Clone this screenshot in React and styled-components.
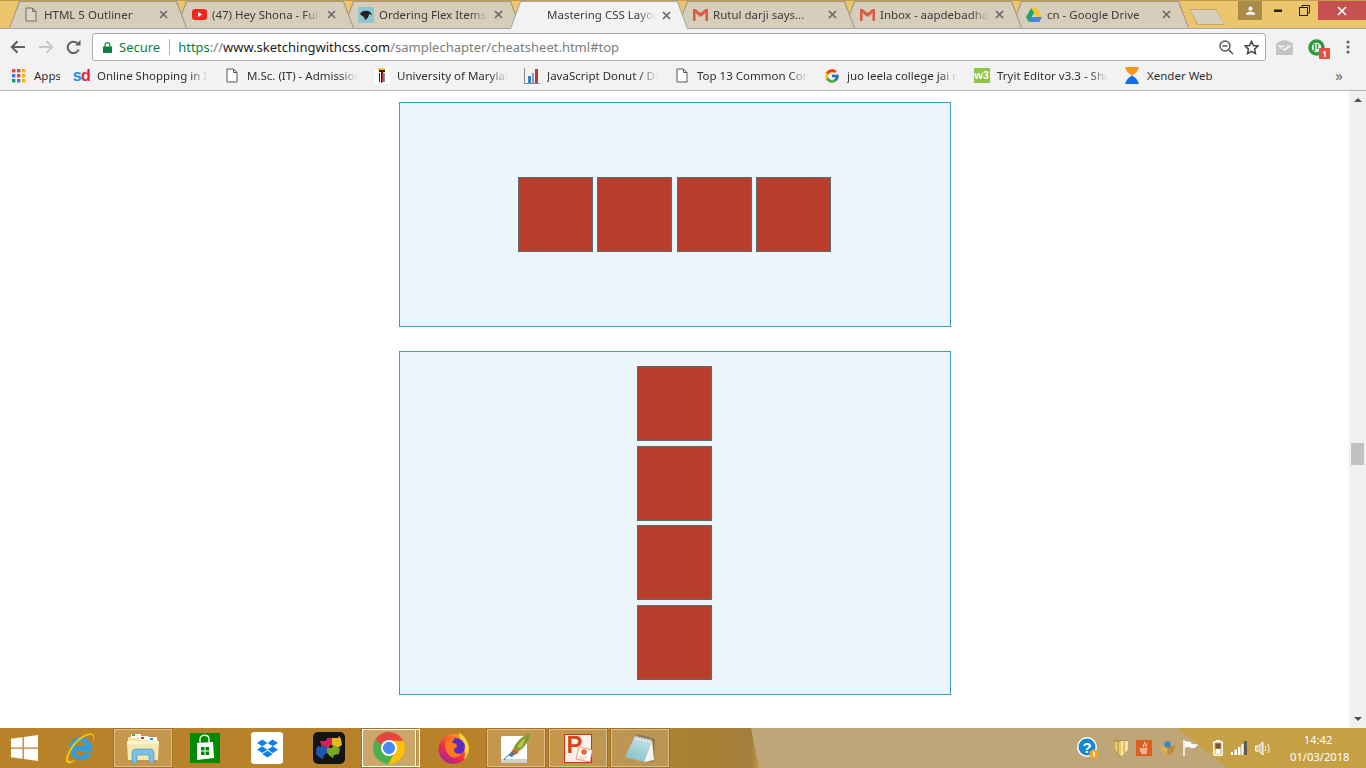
import React from 'react';
import styled, {createGlobalStyle} from 'styled-components';
import {FaDropbox} from 'react-icons/fa';
import {FcGoogle} from 'react-icons/fc';

const uiFont = `"Noto Sans", "Open Sans", "Liberation Sans", sans-serif`;

const Global = createGlobalStyle`
    html, body {
        margin: 0;
        height: 100%;
        overflow: hidden;
        background: #fff;
        font-family: ${uiFont};
    }
    * { box-sizing: border-box; }
`;

const Screen = styled.div`
    width: 1366px;
    height: 768px;
    display: flex;
    flex-direction: column;
    overflow: hidden;
`;

/* ---------- tabs ---------- */

const TabStrip = styled.div`
    position: relative;
    z-index: 2;
    height: 28px;
    flex: none;
    display: flex;
    padding: 1px 0 0 9px;
    background: #edc56c;
    border-top: 1px solid #c29c52;
`;

const Tab = styled.div`
    position: relative;
    width: 178px;
    height: ${p => (p.$active ? 28 : 27)}px;
    flex: none;
    margin-top: -1px;
    margin-right: -11px;
    padding: 0 0 0 ${p => (p.$plain ? 32 : 15)}px;
    display: flex;
    align-items: center;
    z-index: ${p => (p.$active ? 20 : 10 - p.$order)};
    background: ${p => (p.$active ? '#a8a8a8' : '#a39a85')};
    clip-path: polygon(10px 0, 168px 0, 178px 100%, 0 100%);

    &::before {
        content: '';
        position: absolute;
        inset: 1px 1px 0 1px;
        background: ${p => (p.$active ? '#f2f2f2' : '#d6ceba')};
        clip-path: polygon(10px 0, 166px 0, 176px 100%, 0 100%);
    }
`;

const TabIcon = styled.span`
    position: relative;
    width: 16px;
    height: 16px;
    margin-left: ${p => p.$shift || 0}px;
    flex: none;
    display: flex;
    align-items: center;
    justify-content: center;
`;

const TabTitle = styled.span`
    position: relative;
    width: 111px;
    margin-left: 5px;
    font-size: 11.5px;
    line-height: 16px;
    color: #3b3b3b;
    white-space: nowrap;
    overflow: hidden;
    mask-image: linear-gradient(to right, #000 82%, transparent 98%);
`;

const TabClose = styled.svg`
    position: relative;
    margin-left: 4px;
    flex: none;
`;

const NewTab = styled.div`
    position: relative;
    width: 36px;
    height: 16px;
    margin: 7px 0 0 11px;
    flex: none;
    background: #c4a862;
    clip-path: polygon(0 0, 27px 0, 100% 100%, 8px 100%);

    &::before {
        content: '';
        position: absolute;
        inset: 1px;
        background: #d6ceba;
        clip-path: polygon(0 0, 26px 0, 100% 100%, 8px 100%);
    }
`;

const WindowControls = styled.div`
    margin-left: auto;
    margin-top: -1px;
    display: flex;
    align-items: flex-start;
`;

const ProfileButton = styled.div`
    width: 24px;
    height: 19px;
    margin-right: 3px;
    background: #a98b45;
    display: flex;
    align-items: center;
    justify-content: center;
`;

const WindowButton = styled.div`
    width: ${p => p.$w}px;
    height: 19px;
    display: flex;
    align-items: center;
    justify-content: center;
    background: ${p => p.$bg || 'transparent'};
`;

/* ---------- toolbar ---------- */

const Toolbar = styled.div`
    height: 34px;
    flex: none;
    display: flex;
    align-items: center;
    padding: 4px 0 1px 0;
    border-top: 1px solid #a6a6a6;
    background: #f2f2f2;
`;

const NavButtons = styled.div`
    width: 92px;
    flex: none;
    display: flex;
    align-items: center;
    padding-left: 10px;
    gap: 12px;
`;

const Omnibox = styled.div`
    width: 1174px;
    height: 28px;
    flex: none;
    display: flex;
    align-items: center;
    padding: 0 6px 0 10px;
    background: #fff;
    border: 1px solid #ababab;
    border-radius: 3px;
`;

const Secure = styled.span`
    margin-left: 7px;
    font-size: 13px;
    color: #0b8043;
`;

const Divider = styled.span`
    width: 1px;
    height: 16px;
    margin: 0 8px 0 9px;
    background: #b4b4b4;
`;

const Url = styled.span`
    font-size: 13px;
    color: #7d7d7d;
    white-space: nowrap;

    b { font-weight: 400; color: #0b8043; }
    i { font-style: normal; color: #222; }
`;

const OmniActions = styled.div`
    margin-left: auto;
    display: flex;
    align-items: center;
    gap: 10px;
`;

const Extensions = styled.div`
    flex: 1;
    display: flex;
    align-items: center;
    padding-left: 10px;
`;

const ExtensionSlot = styled.div`
    position: relative;
    display: flex;
    margin-left: ${p => p.$gap || 0}px;
`;

const Badge = styled.span`
    position: absolute;
    left: 11px;
    top: 9px;
    width: 11px;
    height: 11px;
    background: #e8503f;
    color: #fff;
    font-size: 8px;
    line-height: 11px;
    font-weight: 700;
    text-align: center;
`;

const FlipSvg = styled.svg`
    transform: ${p => (p.$flip ? 'scaleX(-1)' : 'none')};
`;

/* ---------- bookmarks ---------- */

const BookmarkBar = styled.div`
    height: 29px;
    flex: none;
    display: flex;
    align-items: center;
    padding-bottom: 1px;
    background: #f2f2f2;
    border-bottom: 1px solid #b4b4b4;
`;

const Bookmark = styled.div`
    width: ${p => p.$w || 150}px;
    flex: none;
    display: flex;
    align-items: center;
    padding-left: ${p => p.$pad || 8}px;
`;

const BookmarkIcon = styled.span`
    width: 17px;
    height: 17px;
    flex: none;
    display: flex;
    align-items: center;
    justify-content: center;
`;

const BookmarkText = styled.span`
    flex: 1;
    margin-left: 7px;
    margin-right: 5px;
    font-size: 11.5px;
    color: #2f2f2f;
    white-space: nowrap;
    overflow: hidden;
    mask-image: ${p => (p.$nofade ? 'none' : 'linear-gradient(to right, #000 82%, transparent 98%)')};
`;

const SdLogo = styled.span`
    font-family: "Liberation Sans", sans-serif;
    font-size: 16px;
    font-weight: 700;
    letter-spacing: -0.5px;
    color: #1a8fe0;

    em { font-style: normal; color: #ee1c3b; }
`;

const W3Logo = styled.span`
    width: 16px;
    height: 15px;
    background: #8dc63f;
    color: #fff;
    font-family: "Liberation Sans", sans-serif;
    font-size: 11px;
    line-height: 15px;
    font-weight: 700;
    text-align: center;
`;

const More = styled.span`
    margin-left: auto;
    margin-right: 23px;
    font-size: 15px;
    line-height: 15px;
    color: #666;
`;

/* ---------- page ---------- */

const Body = styled.div`
    flex: 1;
    min-height: 0;
    display: flex;
    background: #fff;
`;

const Page = styled.div`
    flex: 1;
    display: flex;
    flex-direction: column;
    align-items: center;
    gap: 24px;
    padding: 11px 0 0 1px;
`;

const Demo = styled.div`
    width: 552px;
    height: ${p => p.$h}px;
    display: flex;
    flex-direction: ${p => p.$dir};
    align-items: center;
    justify-content: center;
    gap: 4.4px;
    padding-right: ${p => (p.$dir === 'row' ? 0.8 : 1)}px;
    background: #ecf5fc;
    border: 1px solid #3e9bc9;
`;

const Square = styled.div`
    width: 75px;
    height: 75px;
    flex: none;
    background: #b93d2d;
    border: 1px solid #5f6a6a;
`;

const Scrollbar = styled.div`
    width: 17px;
    flex: none;
    display: flex;
    flex-direction: column;
    align-items: center;
    background: #f1f1f1;
`;

const ScrollArrow = styled.div`
    width: 0;
    height: 0;
    margin-top: ${p => (p.$down ? 'auto' : '7px')};
    margin-bottom: ${p => (p.$down ? '7px' : '0')};
    border-left: 4px solid transparent;
    border-right: 4px solid transparent;
    border-bottom: ${p => (p.$down ? 'none' : '4px solid #505050')};
    border-top: ${p => (p.$down ? '4px solid #505050' : 'none')};
`;

const ScrollThumb = styled.div`
    width: 13px;
    height: 22px;
    margin-top: 341px;
    background: #c1c1c1;
`;

/* ---------- taskbar ---------- */

const Taskbar = styled.div`
    position: relative;
    height: 40px;
    flex: none;
    display: flex;
    align-items: stretch;
    gap: 4px;
    padding: 1px 0;
    background: linear-gradient(to right, #b8822a 0, #b8822a 560px, #a88033 700px, #a37d40 751px, #c6a045 760px, #c6a045 100%);

    &::before {
        content: '';
        position: absolute;
        inset: 0;
        background: #bfa678;
        clip-path: polygon(751px 0, 1177px 0, 1227px 100%, 759px 100%);
    }
`;

const TaskSlot = styled.div`
    position: relative;
    width: ${p => p.$w || 58}px;
    flex: none;
    display: flex;
    align-items: center;
    justify-content: center;
    background: ${p => (p.$open ? 'rgba(255, 255, 255, 0.17)' : 'transparent')};
    border: ${p => (p.$open ? '1px solid rgba(255, 255, 255, 0.38)' : 'none')};
    box-shadow: ${p => (p.$open ? '0 0 0 1px rgba(120, 80, 20, 0.35)' : 'none')};
`;

const ChromeSlot = styled(TaskSlot)`
    background: rgba(255, 255, 255, 0.3);
    border: 1px solid #fff;
    width: 54px;
    margin-right: 5px;

    &::after {
        content: '';
        position: absolute;
        top: -1px;
        bottom: -1px;
        right: -5px;
        width: 4px;
        border: 1px solid #fff;
        border-left: none;
        background: rgba(255, 255, 255, 0.2);
    }
`;

const Tray = styled.div`
    position: relative;
    margin-left: auto;
    display: flex;
    align-items: center;
    gap: 15px;
`;

const TrayGroup = styled.div`
    display: flex;
    align-items: center;
    gap: 8px;
`;

const Clock = styled.div`
    width: 76px;
    padding-right: 20px;
    margin-left: 4px;
    color: #fff;
    font-size: 11.2px;
    line-height: 17px;
    text-align: center;
    white-space: nowrap;
`;

/* ---------- drawings ---------- */

const DocIcon = () => (
    <svg width="12" height="15" viewBox="0 0 12 15">
        <path d="M1 1h6.500L11 4.500V14H1z M7.500 1v3.500H11" fill="#fff" fillOpacity="0.15" stroke="#6b6b6b" />
    </svg>
);

const PlainDoc = () => (
    <svg width="12" height="15" viewBox="0 0 12 15">
        <path d="M1 1h6.500L11 4.500V14H1z M7.500 1v3.500H11" fill="#fff" stroke="#555" />
    </svg>
);

const YoutubeIcon = () => (
    <svg width="15" height="11" viewBox="0 0 15 11">
        <rect width="15" height="11" rx="3" fill="#f1271c" />
        <path d="M6 3l4 2.500L6 8z" fill="#fff" />
    </svg>
);

const BirdIcon = () => (
    <svg width="16" height="16" viewBox="0 0 16 16">
        <rect width="16" height="16" fill="#8ec7d2" />
        <path d="M2 7c1-3 5-4 8-3 2 .6 3 2 4 4l-3-1c0 3-2 5-4 6l-1-3C4 9 3 8 2 7z" fill="#222" />
    </svg>
);

const GmailIcon = () => (
    <svg width="15" height="12" viewBox="0 0 15 12">
        <path d="M0 0h2.500l5 4 5-4H15v12h-2.500V4l-5 4-5-4v8H0z" fill="#dd5a44" />
    </svg>
);

const DriveIcon = () => (
    <svg width="16" height="14" viewBox="0 0 16 14">
        <path d="M5.300 0h5.200L16 9h-5.200z" fill="#f7c325" />
        <path d="M5.300 0L0 9l2.700 5 5.300-9z" fill="#1ea362" />
        <path d="M5.200 9H16l-2.700 5H2.700z" fill="#4a86d8" />
    </svg>
);

const CloseX = () => (
    <TabClose width="9" height="9" viewBox="0 0 9 9">
        <path d="M1 1l7 7M8 1L1 8" stroke="#6a6a6a" strokeWidth="1.700" />
    </TabClose>
);

const AppsGrid = () => {
    const colors = ['#e8453c', '#e8453c', '#f4b400', '#3b78e7', '#e8453c', '#f4b400', '#0f9d58', '#3b78e7', '#f4b400'];
    return (
        <svg width="14" height="14" viewBox="0 0 14 14">
            {colors.map((c, i) => (
                <rect key={i} x={(i % 3) * 5} y={Math.floor(i / 3) * 5} width="3.400" height="3.400" fill={c} />
            ))}
        </svg>
    );
};

const UmdIcon = () => (
    <svg width="16" height="17" viewBox="0 0 16 17">
        <rect width="16" height="17" fill="#fff" />
        <path d="M4 1h7v2H4z" fill="#f4c51c" />
        <path d="M5 3h6v2H5zM7 5h1v11H7zM5 6h1v9H5zM9.500 6h1v9h-1z" fill="#222" />
        <path d="M8 5h1.300v10H8z" fill="#b3262c" />
    </svg>
);

const ChartIcon = () => (
    <svg width="16" height="16" viewBox="0 0 16 16">
        <path d="M.5 0v15.500H16" fill="none" stroke="#888" />
        <rect x="4" y="8" width="3" height="7" fill="#3f7fc4" />
        <rect x="8" y="5" width="2" height="10" fill="#7aa0c8" />
        <rect x="11" y="1" width="3" height="14" fill="#c0392b" />
    </svg>
);

const XenderIcon = () => (
    <svg width="16" height="17" viewBox="0 0 16 17">
        <path d="M1 0c3 0 11 0 14 0-1 4-4 7-7 8.500C5 7 2 4 1 0z" fill="#f7941d" />
        <path d="M1 17c3 0 11 0 14 0-1-4-4-7-7-8.500C5 10 2 13 1 17z" fill="#0f6fe8" />
    </svg>
);

const Lock = () => (
    <svg width="9" height="11" viewBox="0 0 9 11">
        <path d="M2 5V3.200a2.500 2.500 0 0 1 5 0V5" fill="none" stroke="#0b8043" strokeWidth="1.200" />
        <rect y="4.500" width="9" height="6.500" rx="0.500" fill="#0b8043" />
    </svg>
);

const Arrow = ({flip, color}) => (
    <FlipSvg $flip={flip} width="16" height="14" viewBox="0 0 16 14">
        <path d="M15 7H2M7.500 1.300L1.800 7l5.700 5.700" fill="none" stroke={color} strokeWidth="2" />
    </FlipSvg>
);

const Reload = () => (
    <svg width="15" height="15" viewBox="0 0 15 15">
        <path d="M12.700 9.500A5.700 5.700 0 1 1 11.500 3.400" fill="none" stroke="#5f5f5f" strokeWidth="2" />
        <path d="M9 5.600h5.500V.1z" fill="#5f5f5f" />
    </svg>
);

const Magnifier = () => (
    <svg width="15" height="15" viewBox="0 0 15 15">
        <circle cx="6" cy="6" r="5" fill="none" stroke="#555" strokeWidth="1.400" />
        <path d="M3.500 6h5M9.700 9.700L14 14" stroke="#555" strokeWidth="1.500" />
    </svg>
);

const Star = () => (
    <svg width="15" height="15" viewBox="0 0 15 15">
        <path d="M7.500 1.300l1.900 4.200 4.600.5-3.400 3.100.9 4.500-4-2.300-4 2.300.9-4.500L1 6l4.600-.5z" fill="none" stroke="#444" strokeWidth="1.500" />
    </svg>
);

const MailCheck = () => (
    <svg width="17" height="15" viewBox="0 0 17 15">
        <path d="M0 3.500l4-2.200 4.500-1.300 4.500 1.300 4 2.200V15H0z" fill="#c4c4c4" />
        <path d="M1 5.500h15L8.500 11z" fill="#f2f2f2" />
        <path d="M5.500 7l1.500 1.500 4-3" fill="none" stroke="#9a9a9a" />
    </svg>
);

const GreenRing = () => (
    <svg width="17" height="17" viewBox="0 0 17 17">
        <circle cx="8.500" cy="8.500" r="6.500" fill="none" stroke="#2e9a3e" strokeWidth="3.500" />
        <path d="M6.500 5v7M9.500 5v5" stroke="#2e9a3e" strokeWidth="1.500" />
    </svg>
);

const MenuDots = () => (
    <svg width="4" height="14" viewBox="0 0 4 14">
        <circle cx="2" cy="2" r="1.600" fill="#666" />
        <circle cx="2" cy="7" r="1.600" fill="#666" />
        <circle cx="2" cy="12" r="1.600" fill="#666" />
    </svg>
);

const WinLogo = () => (
    <svg width="27" height="26" viewBox="0 0 27 26">
        <path d="M0 3.700l11.500-1.500v10.200H0zM12.800 2l14.200-2v12.400H12.800zM0 13.700h11.500v10.100L0 22.300zM12.800 13.700H27V26l-14.200-2z" fill="#fff" />
    </svg>
);

const IeIcon = () => (
    <svg width="32" height="32" viewBox="0 0 32 32">
        <path d="M15 5C8 5 4.500 11 4.500 16.500 4.500 23 9.500 28 16 28c5 0 9-2.500 10.500-7H20c-1 2-2.500 3-4.500 3-3 0-5-2-5.200-5h16.700c.6-7-4-14-12-14zM10.500 14c.4-2.800 2.300-4.500 5-4.500s4.500 1.800 4.800 4.500z" fill="#2d9fe0" />
        <path d="M27 1.500C22 0 12 6 6 15 1.500 22-.5 28 1.800 30.500 4 32.500 9 30 12 27.500 8 29 4.500 30 3.500 28.500 2 26.500 5 20 10 13 16 6 24 1.500 27.500 3.500c1.500 1 1 4-.5 7.500 2.500-3.500 3.500-8 0-9.500z" fill="#f4c20d" />
    </svg>
);

const FolderIcon = () => (
    <svg width="32" height="30" viewBox="0 0 32 30">
        <path d="M1 4h9l2 2h17v5H1z" fill="#f3e3a5" />
        <rect x="4" y="1" width="10" height="4" fill="#fff" />
        <rect x="5" y="1" width="3" height="2" fill="#3db54a" />
        <rect x="12" y="3" width="9" height="4" fill="#fff" />
        <rect x="14" y="4" width="3" height="2" fill="#d9342b" />
        <rect x="21" y="4" width="9" height="4" fill="#fff" />
        <rect x="23" y="5" width="3" height="2" fill="#2f8ae0" />
        <path d="M0 8h32l-1 19H1z" fill="#f6e9b0" />
        <path d="M0 8h32v3H0z" fill="#fbf3cd" />
        <path d="M5 30V20c0-3 2-4 4-4h14c2 0 4 1 4 4v10h-5v-8h-12v8z" fill="#7cc0e8" stroke="#3f89bd" strokeWidth="0.600" />
    </svg>
);

const StoreIcon = () => (
    <svg width="30" height="30" viewBox="0 0 30 30">
        <rect width="30" height="30" fill="#008a00" />
        <path d="M7 10l16-1 1 16-17 2z" fill="#fff" />
        <path d="M10 10V6c0-5 9-5 9 0v4" fill="none" stroke="#fff" strokeWidth="1.300" />
        <path d="M11 14h3.500v3.500H11zM15.500 14H19v3.500h-3.500zM11 18.500h3.500V22H11zM15.500 18.500H19V22h-3.500z" fill="#008a00" />
    </svg>
);

const DropboxTile = styled.span`
    width: 32px;
    height: 32px;
    background: #fff;
    border-radius: 3px;
    color: #0d7fe8;
    display: flex;
    align-items: center;
    justify-content: center;
    font-size: 21px;
`;

const JigsawIcon = () => (
    <svg width="32" height="32" viewBox="0 0 32 32">
        <rect width="32" height="32" rx="5" fill="#141414" />
        <path d="M7 9h6l1-3h6l1 3v4h-4l-1 3H9z" fill="#d81e5b" />
        <path d="M19 6h6l1-2 2 3 1 6-3 2h-4l-3-2z" fill="#e8b61c" />
        <path d="M14 16h5l1-3 4 2 3 1-1 6-5 1-1 3-3-2-3-3z" fill="#78a81f" />
        <path d="M3 17l2-3 4 1 1-2 4 3v5l-3 2-1 4-4-2-3-3z" fill="#1f57b0" />
    </svg>
);

const ChromeIcon = () => (
    <svg width="32" height="32" viewBox="4 4 40 40">
        <circle cx="24" cy="24" r="20" fill="#4caf50" />
        <path d="M24 4v20l8 4-8.800 16h.8c11 0 20-9 20-20S35 4 24 4z" fill="#ffc107" />
        <path d="M41.800 15H24v13l-3-1L7.200 13.300C10.700 7.700 16.900 4 24 4c7.800 0 14.500 4.500 17.800 11z" fill="#e8453c" />
        <circle cx="24" cy="24" r="10" fill="#fff" />
        <circle cx="24" cy="24" r="7.700" fill="#4a8af4" />
    </svg>
);

const FirefoxIcon = () => (
    <svg width="32" height="32" viewBox="0 0 32 32">
        <defs>
            <linearGradient id="ffBody" x1="0.800" y1="0.100" x2="0.200" y2="0.900">
                <stop offset="0" stopColor="#ff9a1f" />
                <stop offset="0.600" stopColor="#f0303f" />
                <stop offset="1" stopColor="#b01fa0" />
            </linearGradient>
        </defs>
        <circle cx="15.500" cy="17" r="15" fill="url(#ffBody)" />
        <path d="M21 .5c5 3 10 9 10 16 0 4-2 9-5 11 2-5 1-10-2-14-1-4-3-8-3-13z" fill="#ffd53a" />
        <circle cx="18" cy="15" r="9" fill="#5a2bc0" />
        <path d="M8 9c3-3 6-3 9-2-2 1-3 3-3 4 3 0 5 1 5 3s-3 2-3 4c0 3 4 5 8 3-2 4-8 6-12 3-4-3-6-10-4-15z" fill="#ff7a1f" />
    </svg>
);

const FeatherIcon = () => (
    <svg width="30" height="30" viewBox="0 0 30 30">
        <rect x="0" y="3" width="26" height="27" rx="2" fill="#fff" />
        <rect x="0" y="26" width="26" height="4" rx="1" fill="#cfcfcf" />
        <path d="M29 0c-8 3-14 9-17 16l6 2c6-4 10-10 11-18z" fill="#7f9a2e" />
        <path d="M24 5c-3 2-6 5-8 9l4 1c2-3 4-6 4-10z" fill="#b7c14a" />
        <path d="M12 16c-2 3-3 5-3 7l7-2 2-3z" fill="#c8622a" />
        <path d="M10 19l4 2-3 3-3-1z" fill="#3b7fb5" />
        <path d="M3 27c2-3 4-5 6-6" stroke="#2c5f8a" strokeWidth="1" fill="none" />
    </svg>
);

const PptTile = styled.svg`
    display: block;
    font-family: "Liberation Sans", sans-serif;
`;

const PptIcon = () => (
    <PptTile width="29" height="29" viewBox="0 0 29 29">
        <rect x="0.500" y="0.500" width="27" height="28" fill="#fdf1e8" stroke="#c9341b" />
        <text x="2.500" y="19" fontSize="24" fontWeight="700" fill="#d2491f">P</text>
        <path d="M15 13l13.500 3-2.500 12-14-3z" fill="#fff" stroke="#e26a3c" strokeWidth="0.700" />
        <circle cx="20" cy="18" r="2.800" fill="#e8652f" />
        <path d="M15 22l8 1.800M14.500 24l6 1.300" stroke="#e8a080" strokeWidth="0.700" />
    </PptTile>
);

const NotepadIcon = () => (
    <svg width="31" height="31" viewBox="0 0 31 31">
        <defs>
            <linearGradient id="padFill" x1="0.200" y1="1" x2="0.700" y2="0">
                <stop offset="0" stopColor="#7fc0ca" />
                <stop offset="1" stopColor="#c8e4e6" />
            </linearGradient>
        </defs>
        <path d="M13 1l17 5-1 22-3 1-12-3z" fill="#6f6040" fillOpacity="0.55" />
        <path d="M19 29l8-22 2 20z" fill="#f4f4f4" />
        <path d="M10 3l17 4-8 22-19-5z" fill="url(#padFill)" />
        <path d="M10 3l17 4-1 3L9 6z" fill="#e2e2e2" />
        <path d="M11 1.500v3M14 2v3M17 3v3M20 3.500v3M23 4.500v3M26 5v3" stroke="#777" strokeWidth="0.800" />
    </svg>
);

const HelpIcon = styled.svg`
    display: block;
    font-family: "Liberation Sans", sans-serif;
`;

const HelpBadge = () => (
    <HelpIcon width="22" height="22" viewBox="0 0 22 22">
        <circle cx="10" cy="10" r="9.250" fill="#1187d8" stroke="#fff" strokeWidth="1.500" />
        <text x="10" y="15.500" fontSize="15" fontWeight="700" fill="#fff" textAnchor="middle">?</text>
        <circle cx="17" cy="17" r="4.500" fill="#f4a71d" />
        <rect x="16.300" y="14.500" width="1.400" height="5" fill="#fff" />
    </HelpIcon>
);

const ShieldIcon = () => (
    <svg width="14" height="17" viewBox="0 0 14 17">
        <path d="M0 1h14v9l-7 7-7-7z" fill="#ecc66b" stroke="#7a6120" strokeWidth="0.600" />
        <path d="M7 1v16l7-7V1z" fill="#f7e3a2" />
        <path d="M4 1v12M10 1v12" stroke="#a98a36" strokeWidth="0.800" />
    </svg>
);

const JavaIcon = () => (
    <svg width="16" height="16" viewBox="0 0 16 16">
        <rect width="16" height="16" fill="#dd5e1f" />
        <path d="M8.500 2c1 2-2 3-1 5M10.500 3.500c.5 1.500-1.500 2-.5 3.500" fill="none" stroke="#fff" />
        <path d="M3.500 8.500h8v1h-8zM4 10.500h7v1H4zM5 12.500h6v1H5z" fill="#fff" />
    </svg>
);

const PackageIcon = () => (
    <svg width="15" height="15" viewBox="0 0 15 15">
        <path d="M0 4l7.500 3L15 4l-1.500 7L7.500 15 2 11z" fill="#d9ad55" />
        <path d="M7.500 7L15 4l-1.500 7-6 4z" fill="#b98c3c" />
        <circle cx="7.500" cy="3.500" r="3.200" fill="#3a83c5" />
    </svg>
);

const FlagIcon = () => (
    <svg width="15" height="16" viewBox="0 0 15 16">
        <path d="M1 0v16" stroke="#fff" strokeWidth="1.500" />
        <path d="M2 1l6 1 .6 2 6.400.4-3 3.600-4.500.3L7 6.700 2 7.500z" fill="#fff" />
    </svg>
);

const BatteryIcon = () => (
    <svg width="10" height="16" viewBox="0 0 10 16">
        <path d="M3 0h4v1.500H3z" fill="#fff" />
        <rect x="0.750" y="1.750" width="8.500" height="13.500" rx="1" fill="none" stroke="#fff" strokeWidth="1.500" />
        <rect x="2.500" y="3.500" width="5" height="5" fill="#6f5a34" />
        <rect x="2.500" y="9" width="5" height="5" fill="#fff" />
    </svg>
);

const SignalIcon = () => (
    <svg width="16" height="14" viewBox="0 0 16 14">
        <rect x="0" y="11" width="2" height="3" fill="#fff" />
        <rect x="3.500" y="8.500" width="2.500" height="5.500" fill="#fff" />
        <rect x="7" y="6" width="2.500" height="8" fill="#fff" />
        <rect x="10.500" y="3" width="2" height="11" fill="#fff" />
        <rect x="13" y="0" width="3" height="14" fill="#5f5a50" />
    </svg>
);

const SoundIcon = () => (
    <svg width="16" height="15" viewBox="0 0 16 15">
        <path d="M.5 5h3L8 1v13L3.500 10h-3z" fill="#d8c9a8" stroke="#fff" />
        <path d="M10 5c1 1.500 1 3.500 0 5M12.500 3c2 2.500 2 6.500 0 9" fill="none" stroke="#fff" />
    </svg>
);

const tabs = [
    {title: 'HTML 5 Outliner', icon: <DocIcon />, shift: -1},
    {title: '(47) Hey Shona - Full Song', icon: <YoutubeIcon />},
    {title: 'Ordering Flex Items', icon: <BirdIcon />},
    {title: 'Mastering CSS Layout', active: true},
    {title: 'Rutul darji says...', icon: <GmailIcon />},
    {title: 'Inbox - aapdebadhan@gmail.com', icon: <GmailIcon />},
    {title: 'cn - Google Drive', icon: <DriveIcon />},
];

const bookmarks = [
    {title: 'Online Shopping in India', icon: <SdLogo>s<em>d</em></SdLogo>},
    {title: 'M.Sc. (IT) - Admission 2018', icon: <PlainDoc />},
    {title: 'University of Maryland', icon: <UmdIcon />},
    {title: 'JavaScript Donut / Doughnut', icon: <ChartIcon />},
    {title: 'Top 13 Common Comments', icon: <PlainDoc />},
    {title: 'juo leela college jai ram', icon: <FcGoogle size={16} />},
    {title: 'Tryit Editor v3.3 - Show', icon: <W3Logo>w3</W3Logo>},
];

export default function App() {
    return (
        <Screen>
            <Global />
            <TabStrip>
                {tabs.map((t, i) => (
                    <Tab key={t.title} $order={i} $active={t.active} $plain={!t.icon}>
                        {t.icon && <TabIcon $shift={t.shift}>{t.icon}</TabIcon>}
                        <TabTitle>{t.title}</TabTitle>
                        <CloseX />
                    </Tab>
                ))}
                <NewTab />
                <WindowControls>
                    <ProfileButton>
                        <svg width="9" height="9" viewBox="0 0 12 11">
                            <circle cx="6" cy="3" r="2.700" fill="#fff" />
                            <path d="M0 11V9l4-2h4l4 2v2z" fill="#fff" />
                        </svg>
                    </ProfileButton>
                    <WindowButton $w={26}>
                        <svg width="8" height="3" viewBox="0 0 8 3"><rect width="8" height="2.500" y="0.500" fill="#222" /></svg>
                    </WindowButton>
                    <WindowButton $w={27}>
                        <svg width="11" height="11" viewBox="0 0 11 11">
                            <path d="M3 2.500V.5h7.500V8H8" fill="none" stroke="#222" />
                            <rect x="0.500" y="2.500" width="8" height="8" fill="none" stroke="#222" />
                        </svg>
                    </WindowButton>
                    <WindowButton $w={48} $bg="#c75050">
                        <svg width="10" height="10" viewBox="0 0 10 10">
                            <path d="M1 1l8 8M9 1l-8 8" stroke="#fff" strokeWidth="1.700" />
                        </svg>
                    </WindowButton>
                </WindowControls>
            </TabStrip>

            <Toolbar>
                <NavButtons>
                    <Arrow color="#5f5f5f" />
                    <Arrow flip color="#c9c9c9" />
                    <Reload />
                </NavButtons>
                <Omnibox>
                    <Lock />
                    <Secure>Secure</Secure>
                    <Divider />
                    <Url>
                        <b>https</b>://<i>www.sketchingwithcss.com</i>/samplechapter/cheatsheet.html#top
                    </Url>
                    <OmniActions>
                        <Magnifier />
                        <Star />
                    </OmniActions>
                </Omnibox>
                <Extensions>
                    <ExtensionSlot><MailCheck /></ExtensionSlot>
                    <ExtensionSlot $gap={15}>
                        <GreenRing />
                        <Badge>1</Badge>
                    </ExtensionSlot>
                    <ExtensionSlot $gap={21}><MenuDots /></ExtensionSlot>
                </Extensions>
            </Toolbar>

            <BookmarkBar>
                <Bookmark $w={65} $pad={10}>
                    <BookmarkIcon><AppsGrid /></BookmarkIcon>
                    <BookmarkText $nofade>Apps</BookmarkText>
                </Bookmark>
                {bookmarks.map(b => (
                    <Bookmark key={b.title}>
                        <BookmarkIcon>{b.icon}</BookmarkIcon>
                        <BookmarkText>{b.title}</BookmarkText>
                    </Bookmark>
                ))}
                <Bookmark $w={110}>
                    <BookmarkIcon><XenderIcon /></BookmarkIcon>
                    <BookmarkText $nofade>Xender Web</BookmarkText>
                </Bookmark>
                <More>»</More>
            </BookmarkBar>

            <Body>
                <Page>
                    <Demo $dir="row" $h={225}>
                        {[1, 2, 3, 4].map(n => <Square key={n} />)}
                    </Demo>
                    <Demo $dir="column" $h={344}>
                        {[1, 2, 3, 4].map(n => <Square key={n} />)}
                    </Demo>
                </Page>
                <Scrollbar>
                    <ScrollArrow />
                    <ScrollThumb />
                    <ScrollArrow $down />
                </Scrollbar>
            </Body>

            <Taskbar>
                <TaskSlot $w={48}><WinLogo /></TaskSlot>
                <TaskSlot><IeIcon /></TaskSlot>
                <TaskSlot $open><FolderIcon /></TaskSlot>
                <TaskSlot><StoreIcon /></TaskSlot>
                <TaskSlot><DropboxTile><FaDropbox /></DropboxTile></TaskSlot>
                <TaskSlot><JigsawIcon /></TaskSlot>
                <ChromeSlot $open><ChromeIcon /></ChromeSlot>
                <TaskSlot><FirefoxIcon /></TaskSlot>
                <TaskSlot $open><FeatherIcon /></TaskSlot>
                <TaskSlot $open><PptIcon /></TaskSlot>
                <TaskSlot $open><NotepadIcon /></TaskSlot>
                <Tray>
                    <HelpBadge />
                    <TrayGroup>
                        <ShieldIcon />
                        <JavaIcon />
                        <PackageIcon />
                        <FlagIcon />
                    </TrayGroup>
                    <TrayGroup>
                        <BatteryIcon />
                        <SignalIcon />
                        <SoundIcon />
                    </TrayGroup>
                    <Clock>14:42<br />01/03/2018</Clock>
                </Tray>
            </Taskbar>
        </Screen>
    );
}
